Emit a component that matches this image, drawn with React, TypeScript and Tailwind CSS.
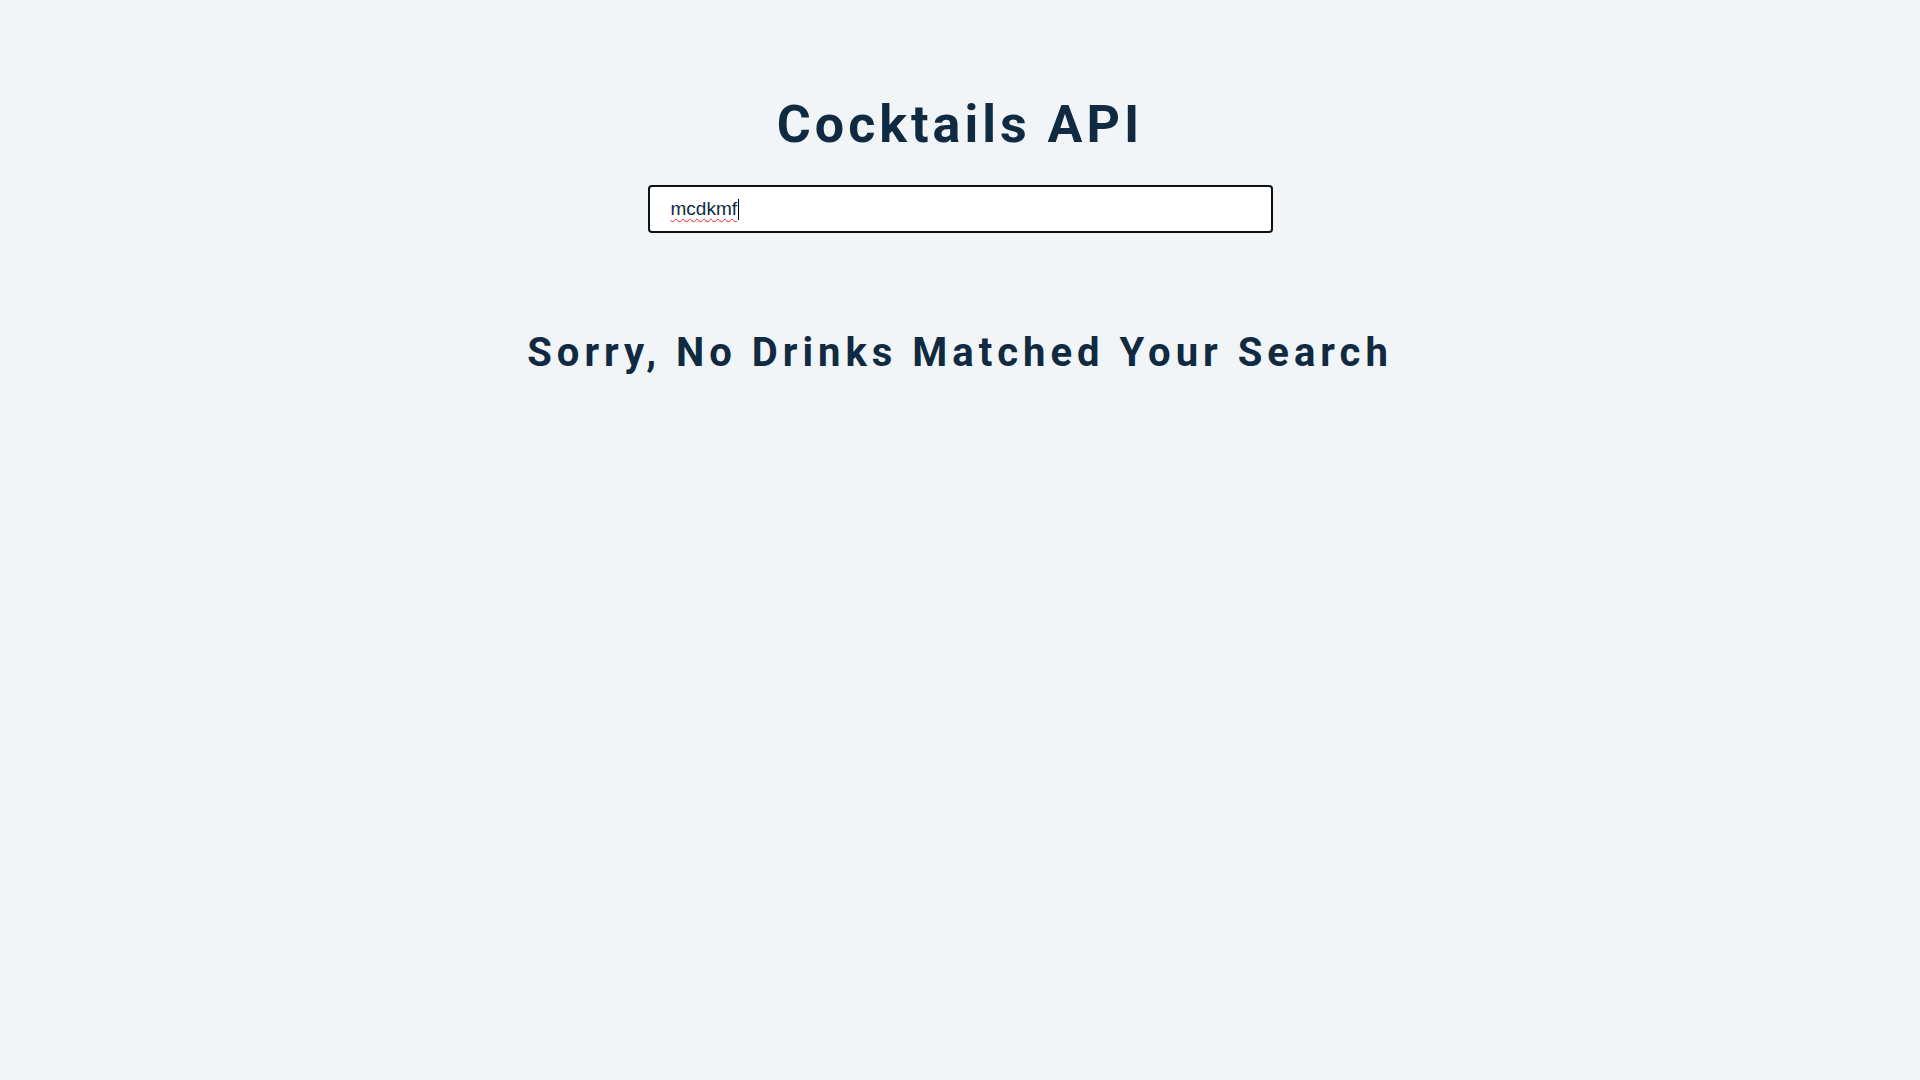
export default function App() {
  return (
    <main className="min-h-screen bg-[#f1f5f8] text-[#102a42] font-['Roboto',sans-serif]">
      <section className="flex flex-col items-center pt-[92px]">
        {/* Header */}
        <h1 className="text-[52px] leading-[65px] font-bold tracking-[4px] text-[#102a42]">
          Cocktails API
        </h1>

        {/* Search form */}
        <form className="mt-[28px] w-[625px]">
          <div className="flex h-[48px] items-center rounded-[4px] border-2 border-[#111] bg-white px-[21px] font-['Liberation_Sans',Arial,sans-serif] text-[19px] text-[#102a42]">
            <span className="underline decoration-wavy decoration-[#ee2222] decoration-1 underline-offset-[3px]">
              mcdkmf
            </span>
            <span className="ml-px h-[21px] w-px bg-black" />
          </div>
        </form>

        {/* Empty result */}
        <h2 className="mt-[95px] text-[40px] leading-[50px] font-bold tracking-[5px] text-[#102a42]">
          Sorry, No Drinks Matched Your Search
        </h2>
      </section>
    </main>
  );
}
